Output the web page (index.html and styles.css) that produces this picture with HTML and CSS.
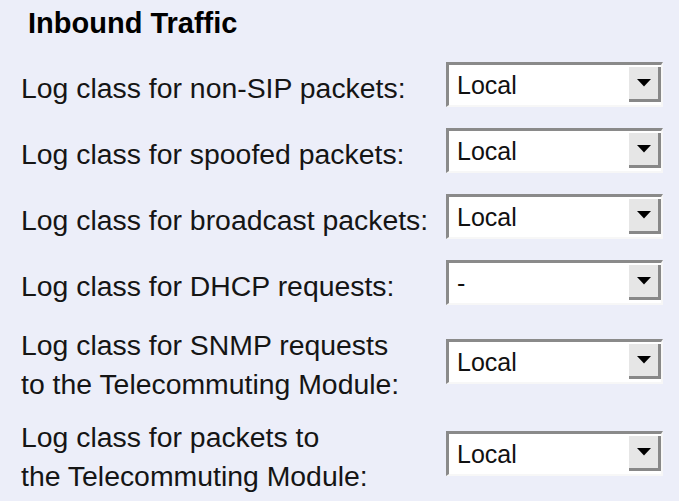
FILE: index.html
```
<!DOCTYPE html>
<html lang="en">
<head>
    <meta charset="UTF-8">
    <title>Inbound Traffic</title>
    <link rel="stylesheet" href="styles.css">
</head>
<body>

<div class="panel">
    <h2 class="title">Inbound Traffic</h2>

    <div class="rows">
        <div class="row">
            <label class="label">Log class for non-SIP packets:</label>
            <div class="combo">
                <span class="value">Local</span>
                <span class="drop"><svg width="14" height="8" viewBox="0 0 14 8"><polygon points="0,0 14,0 7,7.5" fill="#000"/></svg></span>
            </div>
        </div>

        <div class="row">
            <label class="label">Log class for spoofed packets:</label>
            <div class="combo">
                <span class="value">Local</span>
                <span class="drop"><svg width="14" height="8" viewBox="0 0 14 8"><polygon points="0,0 14,0 7,7.5" fill="#000"/></svg></span>
            </div>
        </div>

        <div class="row">
            <label class="label">Log class for broadcast packets:</label>
            <div class="combo">
                <span class="value">Local</span>
                <span class="drop"><svg width="14" height="8" viewBox="0 0 14 8"><polygon points="0,0 14,0 7,7.5" fill="#000"/></svg></span>
            </div>
        </div>

        <div class="row">
            <label class="label">Log class for DHCP requests:</label>
            <div class="combo">
                <span class="value">-</span>
                <span class="drop"><svg width="14" height="8" viewBox="0 0 14 8"><polygon points="0,0 14,0 7,7.5" fill="#000"/></svg></span>
            </div>
        </div>

        <div class="row">
            <label class="label">Log class for SNMP requests<br>to the Telecommuting Module:</label>
            <div class="combo">
                <span class="value">Local</span>
                <span class="drop"><svg width="14" height="8" viewBox="0 0 14 8"><polygon points="0,0 14,0 7,7.5" fill="#000"/></svg></span>
            </div>
        </div>

        <div class="row">
            <label class="label">Log class for packets to<br>the Telecommuting Module:</label>
            <div class="combo">
                <span class="value">Local</span>
                <span class="drop"><svg width="14" height="8" viewBox="0 0 14 8"><polygon points="0,0 14,0 7,7.5" fill="#000"/></svg></span>
            </div>
        </div>
    </div>
</div>

</body>
</html>
```

FILE: styles.css
```
* {
    margin: 0;
    padding: 0;
    box-sizing: border-box;
}

body {
    font-family: 'Liberation Sans', Arial, sans-serif;
    background-color: #eceef9;
    color: #111;
}

.panel {
    padding: 7px 0 0 20px;
}

/* Section heading */
.title {
    font-size: 29px;
    line-height: 33px;
    font-weight: 700;
    color: #000;
    padding-left: 8px;
    margin-bottom: 11px;
}

/* Label / select rows */
.row {
    display: flex;
    align-items: center;
    min-height: 66px;
    padding: 3px 0;
}

.label {
    flex: 0 0 426px;
    white-space: nowrap;
    font-size: 28.4px;
    line-height: 39px;
    padding-top: 8px;
    padding-left: 1px;
    color: #151515;
}

.combo {
    display: flex;
    flex: 0 0 217px;
    height: 45px;
    background-color: #fff;
    border-style: solid;
    border-width: 3px 2px 2px 3px;
    border-color: #8a8a8a #f7f7f7 #f7f7f7 #8a8a8a;
}

.combo .value {
    flex: 1;
    align-self: center;
    font-size: 25px;
    padding-left: 8px;
    padding-top: 1px;
    color: #111;
}

.combo .drop {
    display: flex;
    align-items: center;
    justify-content: center;
    width: 32px;
    height: 35px;
    margin-top: 2px;
    background-color: #e6e6e6;
    border-right: 3px solid #888;
    border-bottom: 3px solid #888;
}
```
